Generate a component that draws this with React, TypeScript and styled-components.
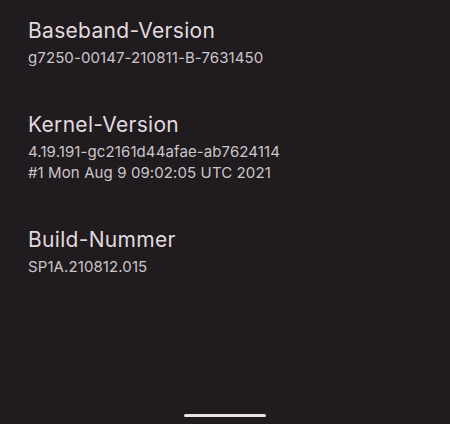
import React from "react";
import styled, { createGlobalStyle } from "styled-components";

const Global = createGlobalStyle`
  html, body { margin: 0; padding: 0; background: #1f1b1e; }
  body { font-family: Inter, Roboto, sans-serif; }
`;

const Screen = styled.div`
  width: 450px;
  height: 424px;
  background: #1f1b1e;
  display: flex;
  flex-direction: column;
  box-sizing: border-box;
  padding: 17px 0 0 28px;
`;

const List = styled.div`
  display: flex;
  flex-direction: column;
  gap: 43px;
  flex: 1;
`;

const Item = styled.div`
  display: flex;
  flex-direction: column;
`;

const Title = styled.div`
  font-size: 21px;
  line-height: 28px;
  letter-spacing: 0.3px;
  color: #e2dadf;
`;

const Sub = styled.div`
  font-size: 15px;
  line-height: 21px;
  letter-spacing: 0.1px;
  color: #cec5ca;
  margin-top: 2px;
`;

const Footer = styled.div`
  display: flex;
  justify-content: center;
  padding: 0 28px 7px 0;
`;

const HomeBar = styled.div`
  width: 82px;
  height: 3px;
  border-radius: 2px;
  background: #e6e6e6;
`;

const items = [
  { title: "Baseband-Version", lines: ["g7250-00147-210811-B-7631450"] },
  {
    title: "Kernel-Version",
    lines: ["4.19.191-gc2161d44afae-ab7624114", "#1 Mon Aug 9 09:02:05 UTC 2021"],
  },
  { title: "Build-Nummer", lines: ["SP1A.210812.015"] },
];

export default function App() {
  return (
    <Screen>
      <Global />
      <List>
        {items.map((it) => (
          <Item key={it.title}>
            <Title>{it.title}</Title>
            <Sub>
              {it.lines.map((l) => (
                <div key={l}>{l}</div>
              ))}
            </Sub>
          </Item>
        ))}
      </List>
      <Footer>
        <HomeBar />
      </Footer>
    </Screen>
  );
}
